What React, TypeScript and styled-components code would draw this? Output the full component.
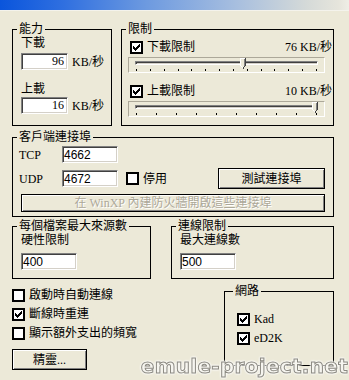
import React from "react";
import styled, { createGlobalStyle } from "styled-components";

const SERIF = `"Liberation Serif", "Noto Sans CJK TC", serif`;
const SANS = `"Liberation Sans", "Noto Sans CJK TC", sans-serif`;

const GlobalStyle = createGlobalStyle`
  html, body { margin: 0; padding: 0; background: #ece9d8; }
  body { font-family: ${SERIF}; font-size: 12px; color: #000; }
`;

const Window = styled.div`
  position: relative;
  width: 349px;
  height: 380px;
  overflow: hidden;
  background: #ece9d8;
  font-family: ${SERIF};
  font-size: 12px;
  line-height: 14px;
  display: flex;
  flex-direction: column;
`;

const TitleStrip = styled.div`
  flex: none;
  height: 10px;
  background: linear-gradient(
    to right,
    #0a55dc 0%,
    #2f6fe0 18%,
    #6d9ae0 42%,
    #a8bfdf 68%,
    #d5dad8 88%,
    #e6e5dc 97%,
    #efeee6 100%
  );
  border-bottom: 1px solid #f4f3ec;
`;

const Body = styled.div`
  display: flex;
  flex-direction: column;
  padding: 11px 15px 0 12px;
`;

const Row = styled.div<{ $gap?: number; $mt?: number }>`
  display: flex;
  align-items: flex-start;
  gap: ${(p) => p.$gap ?? 0}px;
  margin-top: ${(p) => p.$mt ?? 0}px;
`;

const Group = styled.fieldset<{
  $w: number;
  $pt?: number;
  $pb?: number;
  $pl?: number;
  $mt?: number;
}>`
  box-sizing: border-box;
  width: ${(p) => p.$w}px;
  flex: none;
  min-width: 0;
  margin: ${(p) => p.$mt ?? 0}px 0 0 0;
  padding: ${(p) => p.$pt ?? 0}px 8px ${(p) => p.$pb ?? 0}px ${(p) => p.$pl ?? 8}px;
  border: 1px solid #000;
  display: flex;
  flex-direction: column;
  align-items: stretch;
`;

const Legend = styled.legend`
  padding: 0 2px;
  margin-left: -4px;
  line-height: 14px;
  font-size: 12px;
`;

const Label = styled.div<{ $mt?: number }>`
  line-height: 14px;
  margin-top: ${(p) => p.$mt ?? 0}px;
  white-space: nowrap;
`;

const FieldRow = styled.div<{ $mt?: number }>`
  display: flex;
  align-items: center;
  gap: 4px;
  margin-top: ${(p) => p.$mt ?? 0}px;
`;

const Input = styled.input<{ $w: number; $right?: boolean; $serif?: boolean }>`
  box-sizing: border-box;
  width: ${(p) => p.$w}px;
  height: 17px;
  margin: 0;
  padding: 0 ${(p) => (p.$right ? 3 : 1)}px 0 1px;
  border: 1px solid;
  border-color: #808080 #fff #fff #808080;
  box-shadow: inset 1px 1px #404040, inset -1px -1px #d4d0c8;
  background: #fff;
  font-family: ${(p) => (p.$serif ? SERIF : SANS)};
  font-size: 12px;
  color: #000;
  text-align: ${(p) => (p.$right ? "right" : "left")};
  outline: none;
`;

const Unit = styled.span`
  white-space: nowrap;
`;

const CheckRow = styled.div<{ $mt?: number }>`
  display: flex;
  align-items: center;
  gap: 4px;
  height: 14px;
  margin-top: ${(p) => p.$mt ?? 0}px;
  white-space: nowrap;
`;

const Box = styled.span`
  box-sizing: border-box;
  flex: none;
  width: 13px;
  height: 13px;
  border: 2px solid #000;
  background: #fff;
  display: inline-flex;
  align-items: center;
  justify-content: center;
`;

const Value = styled.span`
  margin-left: auto;
  margin-right: -7px;
`;

const Check: React.FC<{ checked?: boolean }> = ({ checked }) => (
  <Box>
    {checked && (
      <svg width="7" height="7" viewBox="0 0 7 7" shapeRendering="crispEdges">
        <path
          d="M6 0h1v3h-1v1h-1v1h-1v1h-1v1h-1v-1h-1v-1h-1v-3h1v1h1v1h1v-1h1v-1h1z"
          fill="#000"
        />
      </svg>
    )}
  </Box>
);

const SliderFrame = styled.div<{ $mt?: number }>`
  position: relative;
  box-sizing: border-box;
  height: 16px;
  margin: ${(p) => p.$mt ?? 0}px 0 0 -2px;
  padding: 3px 6px 0 6px;
  border: 1px solid;
  border-color: #aca899 #fff #fff #aca899;
`;

const Track = styled.div`
  box-sizing: border-box;
  height: 4px;
  border: 1px solid;
  border-color: #808080 #fff #fff #808080;
  background: #d4d0c8;
  box-shadow: inset 1px 1px #404040;
`;

const Ticks = styled.div`
  display: flex;
  justify-content: space-between;
  margin: 4px 1px 0 1px;
  height: 2px;
`;

const Tick = styled.span`
  width: 1px;
  height: 2px;
  background: #000;
`;

const Thumb = styled.span`
  position: absolute;
  top: 0px;
  width: 6px;
  height: 11px;
  display: block;
`;

const Slider: React.FC<{ frac: number; ticks: number; mt?: number }> = ({
  frac,
  ticks,
  mt,
}) => {
  const center = 135 + frac * 180;
  const left = center - 3 - 129;
  return (
    <SliderFrame $mt={mt}>
      <Track />
      <Ticks>
        {Array.from({ length: ticks }).map((_, i) => (
          <Tick key={i} />
        ))}
      </Ticks>
      <Thumb style={{ left }}>
        <svg width="6" height="11" viewBox="0 0 6 11" shapeRendering="crispEdges">
          <path d="M0 0h6v8l-3 3l-3-3z" fill="#ece9d8" />
          <path d="M0 0h5v1h-4v7h-1z" fill="#fff" />
          <path d="M5 0h1v8h-1zM4 8h1v1h-1zM3 9h1v2h-1z" fill="#404040" />
          <path d="M4 1h1v7h-1z" fill="#808080" />
          <path d="M1 8h1v1h-1zM2 9h1v1h-1z" fill="#fff" />
        </svg>
      </Thumb>
    </SliderFrame>
  );
};

const Button = styled.button<{ $w?: number; $h: number; $mt?: number }>`
  box-sizing: border-box;
  flex: none;
  width: ${(p) => (p.$w ? `${p.$w}px` : "100%")};
  height: ${(p) => p.$h}px;
  margin: ${(p) => p.$mt ?? 0}px 0 0 0;
  padding: 0;
  background: #ece9d8;
  border: 1px solid #000;
  box-shadow: inset 1px 1px #fff, inset -1px -1px #808080;
  font-family: ${SERIF};
  font-size: 12px;
  line-height: 14px;
  color: #000;
  &:disabled {
    color: #aca899;
    text-shadow: 1px 1px #fff;
  }
`;

const PortLabel = styled.span`
  width: 43px;
  margin-left: -2px;
  flex: none;
`;

const PortRow = styled.div<{ $mt?: number; $h: number }>`
  display: flex;
  align-items: center;
  height: ${(p) => p.$h}px;
  margin-top: ${(p) => p.$mt ?? 0}px;
`;

const Spacer = styled.span`
  flex: 1;
`;

const InlineCheck = styled.span`
  display: flex;
  align-items: center;
  gap: 4px;
  margin-left: 8px;
`;

const LeftColumn = styled.div`
  flex: 1;
  display: flex;
  flex-direction: column;
  gap: 5px;
  margin-top: 9px;
`;

const Watermark = styled.div`
  position: absolute;
  right: 1px;
  bottom: 3px;
  font-family: "DejaVu Sans", "Liberation Sans", sans-serif;
  font-weight: bold;
  font-size: 20px;
  line-height: 22px;
  letter-spacing: 0.3px;
  color: #f6f5f0;
  -webkit-text-stroke: 1px #8c8a82;
  filter: drop-shadow(0 0 1px #ffffff) drop-shadow(0 0 0.5px #ffffff);
  pointer-events: none;
  white-space: nowrap;
`;

export default function App() {
  return (
    <Window>
      <GlobalStyle />
      <TitleStrip />
      <Body>
        <Row $gap={9}>
          <Group $w={100} $pb={11}>
            <Legend>能力</Legend>
            <Label>下載</Label>
            <FieldRow $mt={3}>
              <Input $w={47} $right $serif defaultValue="96" />
              <Unit>KB/秒</Unit>
            </FieldRow>
            <Label $mt={12}>上載</Label>
            <FieldRow $mt={1}>
              <Input $w={47} $right $serif defaultValue="16" />
              <Unit>KB/秒</Unit>
            </FieldRow>
          </Group>
          <Group $w={213} $pb={8}>
            <Legend>限制</Legend>
            <CheckRow $mt={4}>
              <Check checked />
              <span>下載限制</span>
              <Value>76 KB/秒</Value>
            </CheckRow>
            <Slider frac={0.6} ticks={14} mt={3} />
            <CheckRow $mt={11}>
              <Check checked />
              <span>上載限制</span>
              <Value>10 KB/秒</Value>
            </CheckRow>
            <Slider frac={1} ticks={10} mt={3} />
          </Group>
        </Row>

        <Group $w={322} $pt={2} $pb={4} $mt={4}>
          <Legend>客戶端連接埠</Legend>
          <PortRow $h={17}>
            <PortLabel>TCP</PortLabel>
            <Input $w={56} defaultValue="4662" />
          </PortRow>
          <PortRow $h={21} $mt={5}>
            <PortLabel>UDP</PortLabel>
            <Input $w={56} defaultValue="4672" />
            <InlineCheck>
              <Check />
              <span>停用</span>
            </InlineCheck>
            <Spacer />
            <Button $w={107} $h={21}>
              測試連接埠
            </Button>
          </PortRow>
          <Button $h={18} $mt={5} disabled>
            在 WinXP 內建防火牆開啟這些連接埠
          </Button>
        </Group>

        <Row $gap={20} $mt={2}>
          <Group $w={139} $pb={8}>
            <Legend>每個檔案最大來源數</Legend>
            <Label>硬性限制</Label>
            <FieldRow $mt={6}>
              <Input $w={56} defaultValue="400" />
            </FieldRow>
          </Group>
          <Group $w={163} $pb={8}>
            <Legend>連線限制</Legend>
            <Label>最大連線數</Label>
            <FieldRow $mt={6}>
              <Input $w={56} defaultValue="500" />
            </FieldRow>
          </Group>
        </Row>

        <Row>
          <LeftColumn>
            <CheckRow>
              <Check />
              <span>啟動時自動連線</span>
            </CheckRow>
            <CheckRow>
              <Check checked />
              <span>斷線時重連</span>
            </CheckRow>
            <CheckRow>
              <Check />
              <span>顯示額外支出的頻寬</span>
            </CheckRow>
            <Button $w={75} $h={21} $mt={4}>
              精靈...
            </Button>
          </LeftColumn>
          <Group $w={110} $pt={14} $pb={20} $pl={12} $mt={5}>
            <Legend>網路</Legend>
            <CheckRow>
              <Check checked />
              <span>Kad</span>
            </CheckRow>
            <CheckRow $mt={5}>
              <Check checked />
              <span>eD2K</span>
            </CheckRow>
          </Group>
        </Row>
      </Body>
      <Watermark>emule-project.net</Watermark>
    </Window>
  );
}
